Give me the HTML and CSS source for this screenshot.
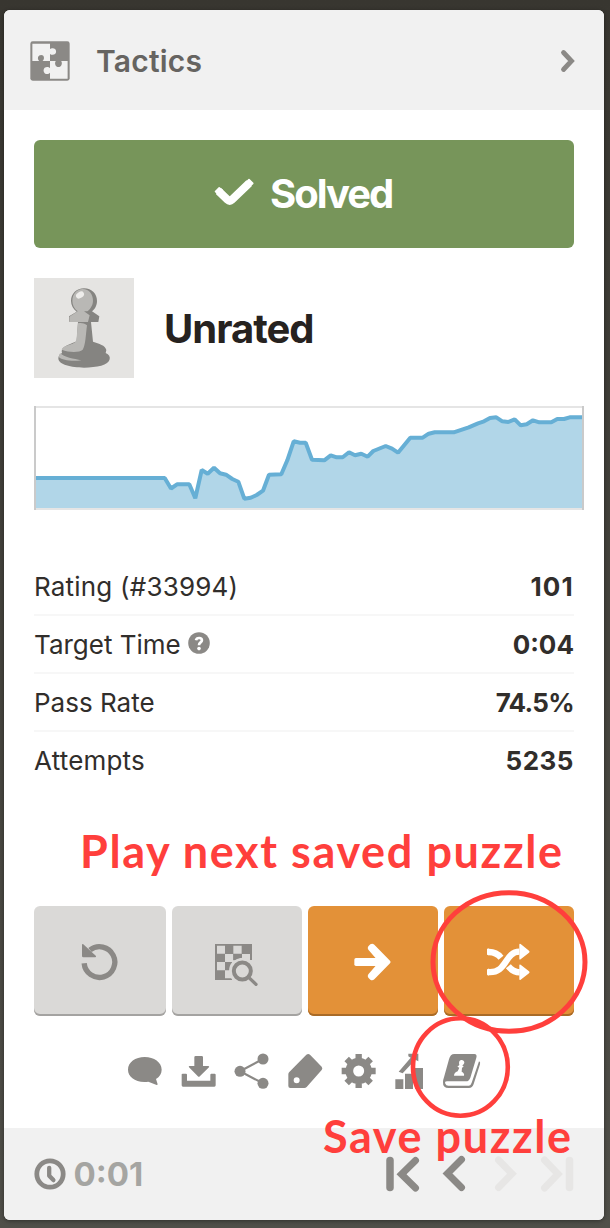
FILE: index.html
```
<!DOCTYPE html>
<html lang="en">
<head>
<meta charset="utf-8">
<title>Tactics</title>
<link rel="stylesheet" href="styles.css">
</head>
<body>
<main class="card">
  <header class="header">
    <svg class="puzzle" viewBox="91 123 118 118">
      <rect x="92" y="124" width="116" height="116" rx="7" fill="#8b8986"/>
      <path fill="#f1f1f1" d="M98 131h52v16c4-4 18-5 18 7s-14 11-18 7v21h-22c7-7 5-18-4-18s-13 10-6 18H98zM150 182h17c-5 8 0 18 8 18s13-10 8-18h19v52h-52v-17c-5 6-19 5-19-7s14-13 19-7z"/>
    </svg>
    <h1 class="title">Tactics</h1>
    <svg class="expand" viewBox="0 0 16 24"><path d="M3.5 3.5 11.5 12 3.5 20.5" fill="none" stroke="#8b8986" stroke-width="4.8" stroke-linecap="round"/></svg>
  </header>

  <section class="content">
    <div class="solved">
      <svg class="check" viewBox="0 0 40 30"><path d="M4.6 13.2 13.4 21.6Q15.7 23.800 18 21.600L35.200 5.200" fill="none" stroke="#fff" stroke-width="8"/><path d="M1.500 13.500 5.200 9.800 8 12 4 16zM32 4.500 35 1.500 38.800 5.300 36 8z" fill="#fff" stroke="#fff" stroke-width="1.600" stroke-linejoin="round"/></svg>
      <span class="solved-text">Solved</span>
    </div>

    <div class="player">
      <svg class="avatar" viewBox="102 444 300 300">
        <path fill="#e5e4e2" d="M102 444h300v300H102z"/>
        <path fill="#858481" d="M252 475c24 0 39 17 39 38 0 14-7 25-15 31l22 15-3 17h-22l6 59c18 7 37 10 40 25l-2 9c10 4 14 11 12 19-3 18-39 25-77 25s-77-9-77-28c0-7 4-12 11-16-4-15 7-20 44-35l4-58-27-1v-16l23-14c-10-8-17-19-17-32 0-22 17-38 39-38z"/>
        <path fill="#b9b8b5" d="M248 477c20 0 31 16 31 35 0 13-8 25-17 32h-10l17 12-5 20h-56v-16l25-16c-10-8-16-18-16-31 0-20 13-36 31-36zM234 580c10-2 19 0 27 6-4 29-4 60-13 73-10 9-40 9-63 0 3-13 34-15 42-24 5-14 4-36 7-55zM181 670c10 11 41 17 63 21-27 4-58 0-67-9 0-5 0-9 4-12z"/>
        <ellipse cx="240" cy="495" rx="13" ry="9" transform="rotate(-32 240 495)" fill="#eeedeb"/>
      </svg>
      <h2 class="rank">Unrated</h2>
    </div>

    <svg class="chart" viewBox="34 406 550 104">
      <path fill="#b1d6e8" d="M36 478 164.7 478 171 488.5 177 484.3 189.3 484.3 195.3 498.3 201.7 470 207.7 473.7 214 467.7 220 473.3 226 474.7 232.3 479 238.3 481.7 244.3 498.7 250.7 497.7 256.7 495 263 490.7 269 474.7 281.3 474.3 287.3 460.3 293.7 441.3 300 442.7 305.7 442.7 312 459.7 324.3 460.3 330.7 455.3 336.7 457.3 342.7 457.3 349 452.3 355 455.3 361.3 453.7 367.7 456.7 373.3 451 385.7 446 392 448.7 398 452.7 410.3 437.7 422.7 437.7 428.7 433.7 434.7 432.3 453.7 432.3 468.7 427.3 478 423.3 484 421.3 490 418 496.3 417.3 502.3 421.3 508.3 422 514.7 419.3 520.7 425.3 526.7 424.3 533 420.3 539.3 422.3 551.3 422.3 557.3 419 564 419 569.7 417.3 582 417.3V508H36z"/>
      <path fill="none" stroke="#66afd5" stroke-width="4" stroke-linejoin="bevel" d="M36 478 164.7 478 171 488.5 177 484.3 189.3 484.3 195.3 498.3 201.7 470 207.7 473.7 214 467.7 220 473.3 226 474.7 232.3 479 238.3 481.7 244.3 498.7 250.7 497.7 256.7 495 263 490.7 269 474.7 281.3 474.3 287.3 460.3 293.7 441.3 300 442.7 305.7 442.7 312 459.7 324.3 460.3 330.7 455.3 336.7 457.3 342.7 457.3 349 452.3 355 455.3 361.3 453.7 367.7 456.7 373.3 451 385.7 446 392 448.7 398 452.7 410.3 437.7 422.7 437.7 428.7 433.7 434.7 432.3 453.7 432.3 468.7 427.3 478 423.3 484 421.3 490 418 496.3 417.3 502.3 421.3 508.3 422 514.7 419.3 520.7 425.3 526.7 424.3 533 420.3 539.3 422.3 551.3 422.3 557.3 419 564 419 569.7 417.3 582 417.3"/>
      <path fill="#e5e5e5" d="M34 406h550v2H34zM34 508h550v2H34z"/>
      <path fill="#cacaca" d="M34 406h2v104h-2zM582 406h2v104h-2z"/>
    </svg>

    <dl class="stats">
      <div class="row"><dt class="wide">Rating (#33994)</dt><dd class="looser">101</dd></div>
      <div class="row"><dt>Target Time</dt><dd>0:04</dd>
        <svg class="help" viewBox="0 0 22 22"><circle cx="11" cy="11" r="10.8" fill="#8b8986"/><path d="M8 8.3C8.6 5.2 13.9 5.2 13.9 8.3c0 2.3-2.9 2-2.9 4.9" fill="none" stroke="#fff" stroke-width="2.7"/><circle cx="11" cy="16.6" r="1.8" fill="#fff"/></svg>
      </div>
      <div class="row"><dt>Pass Rate</dt><dd class="tight">74.5%</dd></div>
      <div class="row"><dt class="wide">Attempts</dt><dd class="loose">5235</dd></div>
    </dl>

    <div class="buttons">
      <button class="btn" aria-label="Retry"><svg viewBox="42 33 396 330"><path d="M192.500 205a46 46 0 1 0 17.500-40" fill="none" stroke="#8b8986" stroke-width="16"/><path fill="#8b8986" d="M186 149q0-3 4-1l38 35q1 3-2 4h-36q-4 0-4-4z"/></svg></button>
      <button class="btn" aria-label="Analyze"><svg viewBox="456 33 390 330"><path fill="#8b8986" fill-rule="evenodd" d="M585 147h111v108H585zM591 152v24h24v-24zM640 152v24h25v-24zM615 177v24h25v-24zM666 177v24h24v-24zM591 201v25h24v-25zM640 201v25h25v-25zM615 226v24h25v-24zM666 226v24h24v-24z"/><circle cx="667" cy="228" r="40" fill="#dad9d7"/><path fill="#dad9d7" d="M636 195h64v62h-64z"/><path fill="#8b8986" d="M640 177h25v11q-12 0-22 8h-3z"/><circle cx="667" cy="228" r="25.5" fill="none" stroke="#8b8986" stroke-width="12"/><path d="m686 247 22 21" stroke="#8b8986" stroke-width="10" stroke-linecap="round"/></svg></button>
      <button class="btn go" aria-label="Next"><svg viewBox="24 78 390 330"><rect x="163" y="234" width="90" height="24" rx="5" fill="#fff"/><path fill="#fff" d="M211 193q6-4 12 1l47 48q4 4 0 8l-47 48q-6 5-12 1l-6-6q-4-5 0-10l32-37-32-37q-4-5 0-10z"/></svg></button>
      <button class="btn go" aria-label="Next saved"><svg viewBox="432 78 390 330"><g fill="none" stroke="#fff" stroke-width="19"><path d="M564 276c58 5 48-60 94-61"/><path d="M564 216c20-1 30 6 39 17M625 259c8 10 16 17 34 18"/></g><path fill="#fff" d="M658 194q0-4 4-2l25 20q3 3 0 6l-25 20q-4 2-4-2zM658 256q0-4 4-2l25 20q3 3 0 6l-25 19q-4 2-4-2zM561 208q0-3 6-2v20l-6-2zM561 269q0-3 6-3v20q-6 1-6-3z"/></svg></button>
    </div>

    <nav class="tools">
      <svg viewBox="51 60 108 120"><path d="M104 81c28 0 51 16 51 38 0 12-6 21-17 28l5 16q0 2-3 2l-25-10c-37 5-61-14-61-36s22-38 50-38z"/></svg>
      <svg viewBox="212 60 108 120"><path d="M256 78h18q4 0 4 4v26h16q4 1 2 4l-29 28-3 0-28-28q-2-3 1-4h15V82q0-4 4-4zM214 133q0-2 3-2h10q3 0 3 3v18h70v-18q0-3 3-3h10q3 0 3 3v32q0 4-4 4h-94q-4 0-4-4z"/></svg>
      <svg viewBox="373 60 108 120"><circle cx="460" cy="87" r="16.5"/><circle cx="391" cy="124" r="16.5"/><circle cx="460" cy="160" r="16.5"/><path d="m460 87-69 37 69 36" fill="none" stroke="#8b8986" stroke-width="6.5"/></svg>
      <svg viewBox="533 60 108 120"><path fill-rule="evenodd" d="M588 74q6-4 11 0l35 36q4 5 0 10l-45 51q-3 3-7 3h-42q-6 0-6-6v-35q0-4 3-7zM559 142a9 9 0 1 0 0 18 9 9 0 0 0 0-18z"/></svg>
      <svg viewBox="694 60 108 120"><circle cx="747" cy="123" r="28" fill="none" stroke="#8b8986" stroke-width="23"/><g fill="none" stroke="#8b8986" stroke-width="19"><path d="M747 72v14M747 160v14M696 123h14M784 123h14M711 87l10 10M773 149l10 10M711 159l10-10M773 97l10-10"/></g></svg>
      <svg viewBox="855 60 108 120"><path d="M856 148h24v29h-24zM885 131h24v46h-24zM915 114h24v63h-24zM895 71h30v23l-9-5-38 41-12-5 36-42-7-4z"/></svg>
      <svg class="book" viewBox="996 60 117 120"><path d="M1033 72h60q9 1 6 11l-18 60q-4 11-13 11h-57q-8 0-5 7 2 6 9 6h62q5 0 8-9l22-64q5 2 3 9l-19 59q-4 12-14 12h-61q-18 0-17-18 0-6 3-14l15-54q4-16 16-16z"/><path fill="#fff" d="M1048 94c4-6 15-5 15 4q-1 5-6 8l4 4-5 3-1 12q9 4 7 12h-30q0-9 11-13l5-11-6-3 6-5q-2-6 0-11z"/></svg>
    </nav>
  </section>

  <footer class="footer">
    <svg class="clock" viewBox="0 0 32 32"><circle cx="16" cy="16" r="13.2" fill="none" stroke="#8b8986" stroke-width="4.8"/><path d="M15.2 9.8v8l4.2 4.3" fill="none" stroke="#8b8986" stroke-width="4.3" stroke-linecap="round" stroke-linejoin="round"/></svg>
    <span class="time">0:01</span>
    <svg class="moves" viewBox="386 1154 188 40">
      <g fill="none" stroke="#8b8986" stroke-width="7" stroke-linecap="round"><path d="M390 1160.500v27" stroke-width="7.500"/><path d="M415.500 1160.500 401.500 1174.200 415.500 1188M461.500 1159.500 447.500 1173.500 461.500 1187.500"/></g>
      <g fill="none" stroke="#e7e6e5" stroke-width="7" stroke-linecap="round"><path d="M498.500 1160 512 1173.700 498.500 1187.500M544.500 1160 558 1174 544.500 1188"/><path d="M569.500 1160.500v27" stroke-width="7.500"/></g>
    </svg>
  </footer>
</main>

<svg class="notes" viewBox="0 0 610 1228">
  <g fill="none" stroke="#ff3f3c"><ellipse cx="509" cy="962" rx="76" ry="69.300" stroke-width="5"/><ellipse cx="460.400" cy="1067" rx="47.400" ry="48.700" stroke-width="4.600"/></g>
  <text class="note" x="80" y="867.500" textLength="482">Play next saved puzzle</text>
  <text class="note" x="323" y="1152.500" textLength="248">Save puzzle</text>
</svg>
</body>
</html>
```

FILE: styles.css
```
* { box-sizing: border-box; }
body {
  margin: 0;
  height: 1228px;
  padding: 10px 6px 8px 4px;
  position: relative;
  background: linear-gradient(#383630, #504f49);
  font-family: Inter, "Liberation Sans", sans-serif;
  color: #312e2b;
}
svg { display: block; flex: none; }
.card {
  height: 1210px;
  border-radius: 6px;
  overflow: hidden;
  background: #fff;
  display: flex;
  flex-direction: column;
  box-shadow: 0 1px 4px rgba(0, 0, 0, .4);
}
.header {
  height: 100px;
  padding: 2px 28px 0 26px;
  background: #f1f1f1;
  display: flex;
  align-items: center;
}
.puzzle { width: 40px; height: 40px; }
.title {
  flex: 1;
  margin: 0 0 0 26px;
  font-size: 30px;
  font-weight: 600;
  letter-spacing: .2px;
  color: #666461;
}
.expand { width: 16px; height: 24px; }
.content { height: 1018px; padding: 30px 20px 0 30px; }
.solved {
  width: 540px;
  height: 108px;
  border-radius: 6px;
  background: #77955a;
  display: flex;
  align-items: center;
  padding-left: 180px;
  color: #fff;
}
.check { width: 40px; height: 30px; margin-top: -3px; }
.solved-text, .rank { font-size: 40px; font-weight: 700; letter-spacing: -2px; }
.solved-text { margin: -2px 0 0 16px; }
.player { display: flex; align-items: center; margin-top: 30px; height: 100px; }
.avatar { width: 100px; height: 100px; }
.rank { margin: 0 0 0 30px; color: #262220; letter-spacing: -1px; }
.chart { width: 550px; height: 104px; margin-top: 28px; }
.stats { width: 540px; margin: 48px 0 0; font-size: 26px; }
.row {
  height: 58px;
  display: flex;
  align-items: center;
  border-bottom: 2px solid #f7f7f7;
}
.row:last-child { border-bottom-color: transparent; }
.row dd { order: 3; margin: 0 0 0 auto; font-weight: 700; }
.wide { letter-spacing: .2px; }
.looser { letter-spacing: 1.2px; }
.tight { letter-spacing: -.7px; }
.loose { letter-spacing: .5px; }
.help { width: 22px; height: 22px; margin-left: 7px; margin-top: -2px; }
.buttons { display: grid; grid-template-columns: 132px 130px 130px 130px; gap: 6px; margin-top: 116px; }
.btn {
  height: 110px;
  padding: 0;
  border: 0;
  border-radius: 6px;
  background: #dad9d7;
  box-shadow: inset 0 -2px #a4a3a1;
}
.btn svg { width: 100%; height: 110px; }
.go { background: #e39138; box-shadow: inset 0 -2px #a96b27; }
.tools { display: flex; gap: 17.6px; margin: 34px 0 0 93px; fill: #8b8986; }
.tools svg { width: 36px; height: 40px; }
.tools .book { width: 39px; margin-left: -6.6px; }
.footer {
  height: 92px;
  padding: 0 30px 0 29.5px;
  background: #f1f1f1;
  display: flex;
  align-items: center;
}
.clock { width: 32px; height: 32px; }
.time { margin-left: 8px; font-size: 33px; font-weight: 700; color: #a5a5a2; }
.moves { width: 188px; height: 40px; margin-left: auto; }
.notes { position: absolute; left: 0; top: 0; width: 610px; height: 1228px; }
.note { font: 700 45px "Trebuchet MS", Lato, sans-serif; fill: #ff3f3c; }
```
